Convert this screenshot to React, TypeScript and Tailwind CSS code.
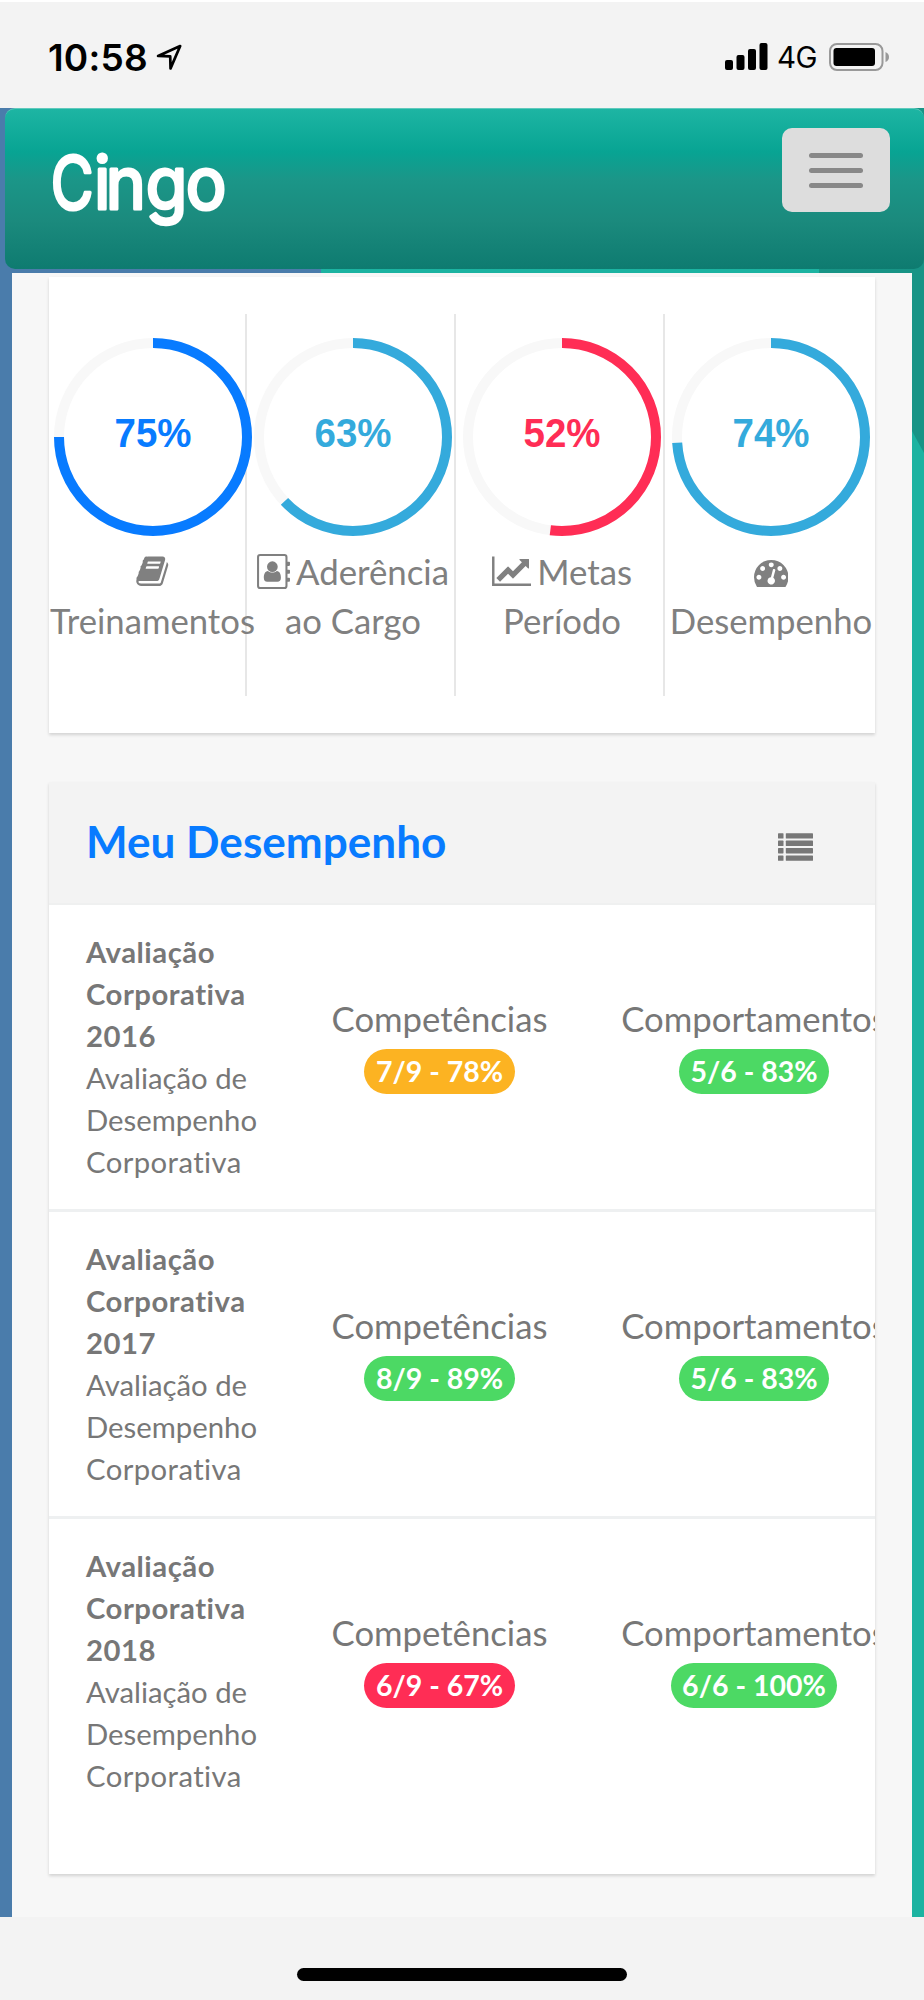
import type { ReactNode } from "react";

const BOOK_PATH =
  "M1703 478q40 57 18 129l-275 906q-19 64-76.5 107.5t-122.5 43.5h-923q-77 0-148.5-53.5t-99.5-131.5q-24-67-2-127 0-4 3-27t4-37q1-8-3-21.5t-3-19.5q2-11 8-21t16.5-23.5 16.5-23.5q23-38 45-91.5t30-91.5q3-10 .5-30t-.5-28q3-11 17-28t17-23q21-36 42-92t25-90q1-9-2.5-32t.5-28q4-13 22-30.5t22-22.5q19-26 42.5-84.5t27.5-96.5q1-8-3-25.5t-2-26.5q2-8 9-18t18-23 17-21q8-12 16.5-30.5t15-35 16-36 19.5-32 26.5-23.5 36-11.5 47.5 5.5l-1 3q38-9 51-9h761q74 0 114 56t18 130l-274 906q-36 119-71.5 153.5t-128.5 34.5h-869q-27 0-38 15-11 16-1 43 24 70 144 70h923q29 0 56-15.5t35-41.5l300-987q7-22 5-57 38 15 59 43zm-1064 2q-4 13 2 22.5t20 9.5h608q13 0 25.5-9.5t16.5-22.5l21-64q4-13-2-22.5t-20-9.5h-608q-13 0-25.5 9.5t-16.5 22.5zm-83 256q-4 13 2 22.5t20 9.5h608q13 0 25.5-9.5t16.5-22.5l21-64q4-13-2-22.5t-20-9.5h-608q-13 0-25.5 9.5t-16.5 22.5z";
const CHART_PATH =
  "M2048 1536v128h-2048v-1536h128v1408h1920zm-128-1248v435q0 21-19.5 29.5t-35.5-7.5l-121-121-633 633q-10 10-23 10t-23-10l-233-233-416 416-192-192 585-585q10-10 23-10t23 10l233 233 464-464-121-121q-16-16-7.5-35.5t29.5-19.5h435q14 0 23 9t9 23z";
const GAUGE_PATH =
  "M384 1152q0-53-37.5-90.5t-90.5-37.5-90.5 37.5-37.5 90.5 37.5 90.5 90.5 37.5 90.5-37.5 37.5-90.5zm192-448q0-53-37.5-90.5t-90.5-37.5-90.5 37.5-37.5 90.5 37.5 90.5 90.5 37.5 90.5-37.5 37.5-90.5zm428 481l101-382q6-26-7.5-48.5t-38.5-29.5-48 6.5-30 39.5l-101 382q-60 5-107 43.5t-63 98.5q-20 77 20 146t117 89 146-20 89-117q16-60-6-117t-72-91zm660-33q0-53-37.5-90.5t-90.5-37.5-90.5 37.5-37.5 90.5 37.5 90.5 90.5 37.5 90.5-37.5 37.5-90.5zm-640-640q0-53-37.5-90.5t-90.5-37.5-90.5 37.5-37.5 90.5 37.5 90.5 90.5 37.5 90.5-37.5 37.5-90.5zm448 192q0-53-37.5-90.5t-90.5-37.5-90.5 37.5-37.5 90.5 37.5 90.5 90.5 37.5 90.5-37.5 37.5-90.5zm320 448q0 261-141 483-19 29-54 29h-1402q-35 0-54-29-141-221-141-483 0-182 71-348t191-286 286-191 348-71 348 71 286 191 191 286 71 348z";

const BookIcon = () => (
  <svg viewBox="0 0 1792 1792" className="h-[34.5px] w-[34.5px] fill-current">
    <path d={BOOK_PATH} />
  </svg>
);

const ChartIcon = () => (
  <svg viewBox="0 0 2048 1792" className="h-[34.5px] w-[39.5px] fill-current">
    <path d={CHART_PATH} />
  </svg>
);

const GaugeIcon = () => (
  <svg viewBox="0 0 1792 1792" className="mt-[2px] h-[34.5px] w-[34.5px] fill-current">
    <path d={GAUGE_PATH} />
  </svg>
);

const AddressBookIcon = () => (
  <svg viewBox="0 0 32 34" className="h-[35px] w-[33px] fill-current">
    <rect x="1" y="1" width="27.6" height="32" rx="2" fill="none" stroke="currentColor" strokeWidth="2" />
    <circle cx="14.9" cy="12.3" r="5.2" />
    <path d="M10.6 16.4c2.6 2.1 6 2.1 8.6 0 2.9.3 4 3.1 4 6.6 0 2.6-1.2 4-3.4 4h-9.9c-2.2 0-3.3-1.4-3.3-4 0-3.5 1.1-6.3 4-6.6z" />
    <path d="M29 7.5h2.2q.8 0 .8.8v2.5q0 .8-.8.8H29zM29 15.3h2.2q.8 0 .8.8v2.4q0 .8-.8.8H29zM29 23h2.2q.8 0 .8.8v2.4q0 .8-.8.8H29z" />
  </svg>
);

const ListIcon = () => (
  <svg viewBox="0 0 35 28" className="h-7 w-[35px] fill-[#777]">
    {[0, 7.4, 14.8, 22.2].map((y) => (
      <g key={y}>
        <rect x="0" y={y + 0.2} width="5.5" height="5.4" rx=".6" />
        <rect x="7.8" y={y + 0.2} width="27.2" height="5.4" rx=".6" />
      </g>
    ))}
  </svg>
);

function Ring({ value, color }: { value: number; color: string }) {
  return (
    <svg viewBox="0 0 198 198" className="block h-[198px] w-[198px] shrink-0">
      <circle cx="99" cy="99" r="94" fill="none" stroke="#f8f8f8" strokeWidth="10" />
      <circle
        cx="99"
        cy="99"
        r="94"
        fill="none"
        stroke={color}
        strokeWidth="10"
        pathLength="100"
        strokeDasharray={`${value} 100`}
        transform="rotate(-90 99 99)"
      />
      <text
        x="99"
        y="109"
        textAnchor="middle"
        fill={color}
        textLength="77"
        lengthAdjust="spacingAndGlyphs"
        className="font-['Liberation_Sans',sans-serif] text-[40px] font-bold"
      >
        {value}%
      </text>
    </svg>
  );
}

type Metric = { value: number; color: string; icon: ReactNode; first?: string; second: string; tile: string };

const metrics: Metric[] = [
  { value: 75, color: "#087bff", icon: <BookIcon />, second: "Treinamentos", tile: "relative z-10 w-[207px]" },
  { value: 63, color: "#34aadc", icon: <AddressBookIcon />, first: "Aderência", second: "ao Cargo", tile: "border-l-2 pl-[5px]" },
  { value: 52, color: "#ff2d55", icon: <ChartIcon />, first: "Metas", second: "Período", tile: "border-l-2 pl-[5px]" },
  { value: 74, color: "#34aadc", icon: <GaugeIcon />, second: "Desempenho", tile: "border-l-2 pl-[2px]" },
];

const reviews = [
  { year: 2016, skills: "7/9 - 78%", skillsColor: "bg-[#fcb322]", behavior: "5/6 - 83%" },
  { year: 2017, skills: "8/9 - 89%", skillsColor: "bg-[#4cd964]", behavior: "5/6 - 83%" },
  { year: 2018, skills: "6/9 - 67%", skillsColor: "bg-[#ff2d55]", behavior: "6/6 - 100%" },
];

function Score({ label, score, color }: { label: string; score: string; color: string }) {
  return (
    <div className="flex flex-col items-center pt-[89px]">
      <span className="text-[34.7px] leading-[49px]">{label}</span>
      <span className={`mt-[6px] flex h-[45px] items-center rounded-full px-[11.5px] pb-[1px] text-[28.5px] font-bold text-white ${color}`}>
        {score}
      </span>
    </div>
  );
}

function StatusBar() {
  return (
    <div className="flex h-[108px] shrink-0 justify-between border-t-2 border-white bg-[#f3f3f3] pt-[32px] pr-[34px] pl-[48px] text-black">
      <div className="flex h-[46px] items-center gap-[9px]">
        <span className="font-['Inter',sans-serif] text-[37px] leading-none font-semibold tracking-[0.2px]">10:58</span>
        <svg viewBox="0 0 26 26" className="-ml-[1px] h-[27px] w-[27px]">
          <path d="M2 11.5 23.3 2 14 23.5 13.7 12z" fill="none" stroke="#000" strokeWidth="2.6" strokeLinejoin="round" />
        </svg>
      </div>
      <div className="flex h-[46px] items-center">
        <svg viewBox="0 0 43 28" className="h-7 w-[43px]">
          <rect x="0" y="17" width="8" height="10" rx="2" />
          <rect x="11.5" y="12" width="8" height="15" rx="2" />
          <rect x="23" y="6" width="8" height="21" rx="2" />
          <rect x="34.5" y="0" width="8" height="27" rx="2" />
        </svg>
        <span className="ml-[9px] w-[43px] pt-[2px] font-['Inter',sans-serif] text-[29.5px] leading-none tracking-[-0.5px]">4G</span>
        <svg viewBox="0 0 61 28" className="ml-[9px] h-7 w-[61px]">
          <rect x="1" y="1" width="52.5" height="26" rx="7" fill="none" stroke="#999" strokeWidth="2" />
          <rect x="4.5" y="5" width="41.5" height="18" rx="3" />
          <path d="M56.5 9q3.5 1.5 3.5 5t-3.5 5z" fill="#999" />
        </svg>
      </div>
    </div>
  );
}

function Header() {
  return (
    <div className="shrink-0 bg-[linear-gradient(90deg,#4a7cab_50%,#189486_50%)] pl-[5px]">
      <header className="flex h-[161px] justify-between rounded-[10px] border-t border-[#5fc9bc] bg-[linear-gradient(180deg,#1db5a3_0%,#08a493_27%,#1b9688_44%,#1b8a7d_70%,#0e7b70_100%)] pt-[19px] pr-[34px] pl-[43px]">
        <svg
          viewBox="0 0 184 110"
          fill="#fff"
          stroke="#fff"
          strokeWidth="3.2"
          strokeLinejoin="round"
          className="h-[110px] w-[184px] overflow-visible font-['Inter',sans-serif] text-[73px]"
        >
          <text transform="scale(.93 1)" y="81">
            <tspan x="3" textLength="46" lengthAdjust="spacingAndGlyphs">C</tspan>
            <tspan x="49.5 62 105 148">ingo</tspan>
          </text>
        </svg>
        <button className="flex h-[84px] w-[108px] flex-col items-center justify-center gap-[10px] rounded-[10px] bg-[#ddd]">
          <span className="h-[5px] w-[54px] rounded-full bg-[#888]" />
          <span className="h-[5px] w-[54px] rounded-full bg-[#888]" />
          <span className="h-[5px] w-[54px] rounded-full bg-[#888]" />
        </button>
      </header>
      {/* page backdrop peeking out below the navbar */}
      <div className="-ml-[5px] h-1 bg-[linear-gradient(90deg,#4a7cab_321px,#1cb3a1_321px,#1cb3a1_819px,#189486_819px)]" />
    </div>
  );
}

export default function App() {
  return (
    <div className="flex h-[2000px] w-[924px] flex-col overflow-hidden bg-[#f3f3f3] font-['Lato',sans-serif] text-[#777] [font-variant-ligatures:none]">
      <StatusBar />
      <Header />

      <div className="flex h-[1644px] shrink-0 bg-[#4a7cab] pl-[12px]">
        <main className="w-[900px] bg-[#f7f7f7] px-[37px] pt-1">
          {/* Indicators */}
          <section className="grid h-[456px] grid-cols-[196px_209px_209px_212px] bg-white py-[37px] shadow-[0_2px_3px_rgba(0,0,0,0.15)]">
            {metrics.map((m) => (
              <div key={m.second} className={`flex flex-col items-center border-[#e7e7e7] pt-6 ${m.tile}`}>
                <Ring value={m.value} color={m.color} />
                <div className="mt-[11px] flex h-[49px] items-center gap-[6px] text-[34.8px] leading-[49px] text-[#808080]">
                  {m.icon}
                  {m.first && <span>{m.first}</span>}
                </div>
                <div className="text-[34.7px] leading-[49px] text-[#808080]">{m.second}</div>
              </div>
            ))}
          </section>

          {/* Reviews */}
          <section className="mt-[49px] h-[1092px] overflow-hidden bg-white shadow-[0_2px_3px_rgba(0,0,0,0.15)]">
            <div className="flex h-[123px] items-center justify-between border-b-2 border-[#eff0f0] bg-[#f3f3f3] pr-[62px] pl-[37px]">
              <h2 className="pb-[3px] text-[44.1px] leading-none font-bold text-[#087bff]">Meu Desempenho</h2>
              <div className="pt-[8px]">
                <ListIcon />
              </div>
            </div>
            {reviews.map((r) => (
              <div key={r.year} className="grid h-[307px] grid-cols-[236px_309px_320px] border-b-[3px] border-[#eef0f1] last:border-b-0">
                <div className="pt-[26px] pl-[37px] text-[29.3px] leading-[42px]">
                  <strong className="block tracking-[0.5px]">
                    Avaliação
                    <br />
                    Corporativa
                    <br />
                    {r.year}
                  </strong>
                  Avaliação de
                  <br />
                  Desempenho
                  <br />
                  <span className="tracking-[0.4px]">Corporativa</span>
                </div>
                <Score label="Competências" score={r.skills} color={r.skillsColor} />
                <Score label="Comportamentos" score={r.behavior} color="bg-[#4cd964]" />
              </div>
            ))}
          </section>
        </main>
        <div className="w-3 bg-[#1cb3a1]">
          <svg viewBox="0 0 12 180" className="block h-[180px] w-3">
            <path d="M0 0H12V180L0 158z" fill="#189486" />
          </svg>
        </div>
      </div>

      <div className="flex h-[83px] shrink-0 justify-center pt-[51px]">
        <div className="h-[13px] w-[330px] rounded-full bg-black" />
      </div>
    </div>
  );
}
